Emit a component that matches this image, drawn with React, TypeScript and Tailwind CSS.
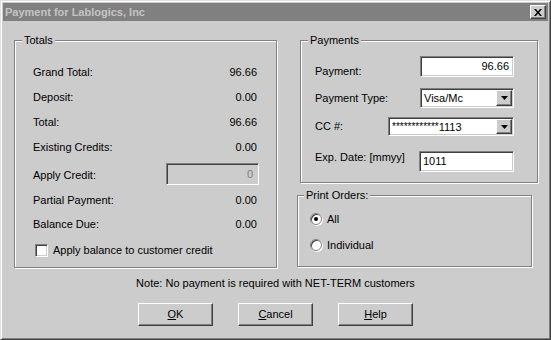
import React from "react";

const sunken =
  "border-t border-l border-t-[#808080] border-l-[#808080] border-b border-r border-b-white border-r-white shadow-[inset_1px_1px_0_#404040,inset_-1px_-1px_0_#cccccc]";
const raised =
  "border-t border-l border-t-white border-l-white border-b border-r border-b-[#404040] border-r-[#404040] shadow-[inset_-1px_-1px_0_#808080]";

function GroupBox({
  title,
  titleLeft,
  className,
  children,
}: {
  title: string;
  titleLeft: string;
  className: string;
  children: React.ReactNode;
}) {
  return (
    <div
      className={`relative border border-[#808080] shadow-[inset_1px_1px_0_#fff,1px_1px_0_#fff] ${className}`}
    >
      <span className={`absolute -top-[7px] ${titleLeft} px-[2px] bg-[#cccccc] leading-[13px]`}>
        {title}
      </span>
      {children}
    </div>
  );
}

function DropButton() {
  return (
    <div
      className={`w-[16px] h-full bg-[#cccccc] flex items-center justify-center ${raised}`}
    >
      <svg width="7" height="4" viewBox="0 0 7 4">
        <path d="M0 0h7L3.5 4z" fill="#000" />
      </svg>
    </div>
  );
}

function TotalRow({ label, value, h }: { label: string; value: string; h: string }) {
  return (
    <div className={`flex items-center justify-between ${h}`}>
      <span>{label}</span>
      <span>{value}</span>
    </div>
  );
}

function Radio({ checked, label }: { checked?: boolean; label: string }) {
  return (
    <div className="flex items-center h-[26px] gap-[5px]">
      <div className="w-[12px] h-[12px] rounded-full bg-white border border-[#808080] shadow-[inset_1px_1px_0_#404040,1px_1px_0_#fff] flex items-center justify-center">
        {checked && <div className="w-[4px] h-[4px] rounded-full bg-black" />}
      </div>
      <span>{label}</span>
    </div>
  );
}

function Btn({ label, k }: { label: string; k: string }) {
  return (
    <button
      className={`w-[75px] h-[23px] bg-[#cccccc] flex items-center justify-center ${raised}`}
    >
      <span>
        <span className="underline">{k}</span>
        {label.slice(k.length)}
      </span>
    </button>
  );
}

export default function App() {
  return (
    <div
      className="w-[551px] h-[340px] bg-[#cccccc] border border-t-[#e0e0e0] border-l-[#e0e0e0] border-b-[#404040] border-r-[#404040] shadow-[inset_1px_1px_0_#fff,inset_-1px_-1px_0_#808080] p-[2px] text-[11px] text-black overflow-hidden"
      style={{ fontFamily: '"Liberation Sans", Arial, sans-serif' }}
    >
      {/* Title bar */}
      <div className="h-[18px] bg-[#808080] flex items-center justify-between pl-[2px] pr-[2px]">
        <span className="font-bold text-[11px] text-[#c4c4c4]">Payment for Lablogics, Inc</span>
        <div className={`w-[16px] h-[14px] bg-[#cccccc] flex items-center justify-center ${raised}`}>
          <svg width="8" height="7" viewBox="0 0 8 7">
            <path d="M0 0h2l2 2.5L6 0h2L5 3.5 8 7H6L4 4.5 2 7H0l3-3.5z" fill="#000" />
          </svg>
        </div>
      </div>

      {/* Panels */}
      <div className="flex mt-[19px] ml-[11px]">
        <GroupBox title="Totals" titleLeft="left-[7px]" className="w-[263px] h-[228px] pt-[19px] pl-[18px] pr-[19px]">
          <TotalRow label="Grand Total:" value="96.66" h="h-[25px]" />
          <TotalRow label="Deposit:" value="0.00" h="h-[25px]" />
          <TotalRow label="Total:" value="96.66" h="h-[25px]" />
          <TotalRow label="Existing Credits:" value="0.00" h="h-[25px]" />
          <div className="flex items-center justify-between h-[28px]">
            <span className="pt-[3px]">Apply Credit:</span>
            <div
              className={`w-[93px] h-[22px] -mr-[2px] bg-[#cccccc] text-[#808080] text-right pr-[5px] leading-[20px] ${sunken}`}
            >
              0
            </div>
          </div>
          <TotalRow label="Partial Payment:" value="0.00" h="h-[25px]" />
          <TotalRow label="Balance Due:" value="0.00" h="h-[23px]" />
          <div className="flex items-center h-[28px] gap-[5px] ml-[2px]">
            <div className={`w-[13px] h-[13px] bg-white ${sunken}`} />
            <span>Apply balance to customer credit</span>
          </div>
        </GroupBox>

        <div className="ml-[20px] flex flex-col">
          <GroupBox title="Payments" titleLeft="left-[7px]" className="ml-[3px] w-[238px] h-[143px] pt-[15px] pl-[14px] pr-[23px]">
            <div className="flex items-end justify-between h-[21px]">
              <span className="leading-[13px] -mb-[1px]">Payment:</span>
              <div className={`w-[94px] h-[21px] bg-white text-right pr-[4px] leading-[18px] ${sunken}`}>
                96.66
              </div>
            </div>
            <div className="flex items-center justify-between h-[20px] mt-[11px]">
              <span>Payment Type:</span>
              <div className={`w-[94px] h-[20px] bg-white flex p-[1px] ${sunken}`}>
                <span className="flex-1 pl-[2px] leading-[16px]">Visa/Mc</span>
                <DropButton />
              </div>
            </div>
            <div className="flex items-center justify-between h-[19px] mt-[9px]">
              <span>CC #:</span>
              <div className={`w-[126px] h-[19px] bg-white flex p-[1px] ${sunken}`}>
                <span className="flex-1 pl-[2px] leading-[15px]">
                  <span className="text-[10px] align-[1px]">************</span>1113
                </span>
                <DropButton />
              </div>
            </div>
            <div className="flex items-start justify-between h-[21px] mt-[15px]">
              <span className="leading-[13px]">Exp. Date: [mmyy]</span>
              <div className={`w-[95px] h-[21px] bg-white pl-[3px] leading-[18px] ${sunken}`}>1011</div>
            </div>
          </GroupBox>

          <GroupBox title="Print Orders:" titleLeft="left-[6px]" className="mt-[12px] w-[235px] h-[72px] pt-[10px] pl-[12px]">
            <Radio checked label="All" />
            <Radio label="Individual" />
          </GroupBox>
        </div>
      </div>

      <div className="mt-[9px] text-center leading-[13px]">
        Note: No payment is required with NET-TERM customers
      </div>

      <div className="flex justify-center gap-[25px] mt-[13px]">
        <Btn label="OK" k="O" />
        <Btn label="Cancel" k="C" />
        <Btn label="Help" k="H" />
      </div>
    </div>
  );
}
